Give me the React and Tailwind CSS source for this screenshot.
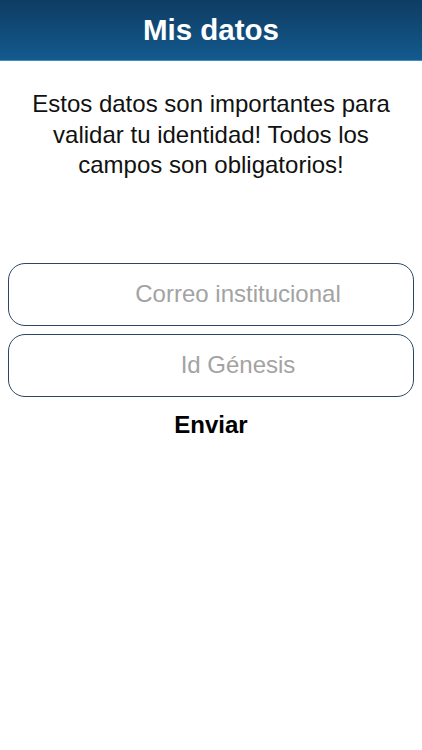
export default function App() {
  return (
    <div className="w-[422px] h-[750px] bg-white font-['Liberation_Sans',Arial,sans-serif] flex flex-col">
      <header className="h-[61px] flex items-center justify-center bg-gradient-to-b from-[#0e3c62] to-[#135a8f] border-b border-[#4a8cc0]">
        <h1 className="text-white font-bold text-[29.5px] leading-none">Mis datos</h1>
      </header>

      <p className="mt-[28px] px-[24px] text-center text-[24px] leading-[30.5px] text-[#111]">
        Estos datos son importantes para validar tu identidad! Todos los campos son obligatorios!
      </p>

      <div className="mt-[82px] px-[8px] flex flex-col gap-[8px]">
        <input
          placeholder="Correo institucional"
          className="h-[63px] w-full rounded-[17px] border-[1.5px] border-[#2a4866] pl-[62px] pr-2 text-center text-[24px] placeholder:text-[#a3a3a3] outline-none"
        />
        <input
          placeholder="Id Génesis"
          className="h-[63px] w-full rounded-[17px] border-[1.5px] border-[#2a4866] pl-[62px] pr-2 text-center text-[24px] placeholder:text-[#a3a3a3] outline-none"
        />
      </div>

      <button className="mt-[10px] self-center text-[24px] font-bold text-black leading-[36px]">
        Enviar
      </button>
    </div>
  );
}
